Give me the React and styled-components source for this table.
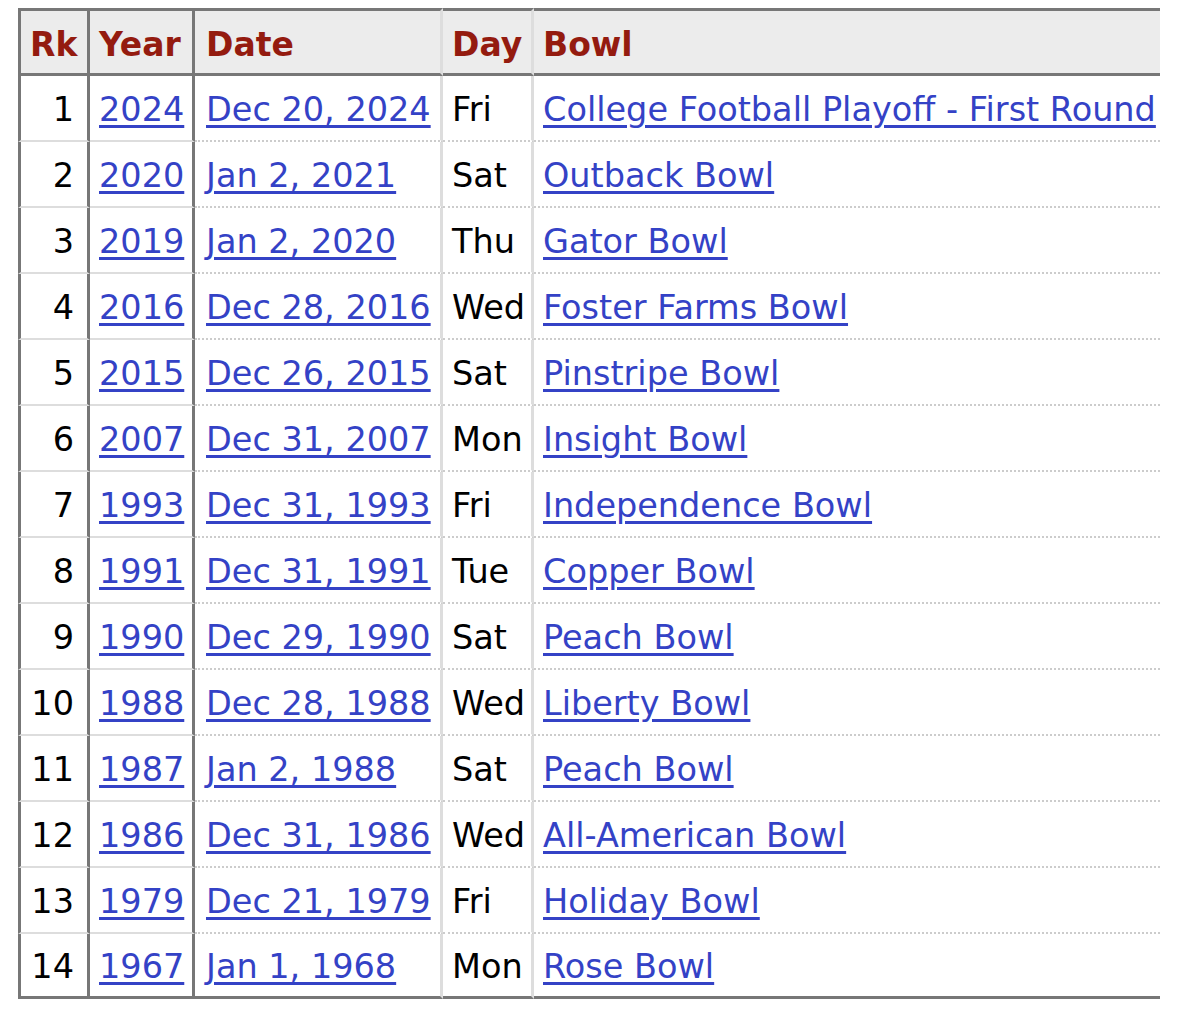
import styled, { createGlobalStyle } from 'styled-components';

const GlobalStyle = createGlobalStyle`
    body {
        margin: 0;
        background: #fff;
        font-family: "DejaVu Sans", Verdana, sans-serif;
    }
`

const bowls = [
    [1, 2024, 'Dec 20, 2024', 'Fri', 'College Football Playoff - First Round'],
    [2, 2020, 'Jan 2, 2021', 'Sat', 'Outback Bowl'],
    [3, 2019, 'Jan 2, 2020', 'Thu', 'Gator Bowl'],
    [4, 2016, 'Dec 28, 2016', 'Wed', 'Foster Farms Bowl'],
    [5, 2015, 'Dec 26, 2015', 'Sat', 'Pinstripe Bowl'],
    [6, 2007, 'Dec 31, 2007', 'Mon', 'Insight Bowl'],
    [7, 1993, 'Dec 31, 1993', 'Fri', 'Independence Bowl'],
    [8, 1991, 'Dec 31, 1991', 'Tue', 'Copper Bowl'],
    [9, 1990, 'Dec 29, 1990', 'Sat', 'Peach Bowl'],
    [10, 1988, 'Dec 28, 1988', 'Wed', 'Liberty Bowl'],
    [11, 1987, 'Jan 2, 1988', 'Sat', 'Peach Bowl'],
    [12, 1986, 'Dec 31, 1986', 'Wed', 'All-American Bowl'],
    [13, 1979, 'Dec 21, 1979', 'Fri', 'Holiday Bowl'],
    [14, 1967, 'Jan 1, 1968', 'Mon', 'Rose Bowl'],
];

// column widths incl. borders
const columns = [
    { key: 'rk', label: 'Rk', width: 72 },
    { key: 'year', label: 'Year', width: 105 },
    { key: 'date', label: 'Date', width: 248 },
    { key: 'day', label: 'Day', width: 91 },
    { key: 'bowl', label: 'Bowl', width: 626 },
];

const App = () => {
    return (
        <>
            <GlobalStyle />
            <Page>
                <BowlTable>
                    <thead>
                        <tr>
                            {columns.map(col => (
                                <HeadCell key={col.key} $col={col.key} $width={col.width}>
                                    {col.label}
                                </HeadCell>
                            ))}
                        </tr>
                    </thead>
                    <tbody>
                        {bowls.map(([rk, year, date, day, bowl], i) => {
                            const last = i === bowls.length - 1;
                            return (
                                <tr key={rk}>
                                    <Cell $col='rk' $last={last}>{rk}</Cell>
                                    <Cell $col='year' $last={last}><Link href='#'>{year}</Link></Cell>
                                    <Cell $col='date' $last={last}><Link href='#'>{date}</Link></Cell>
                                    <Cell $col='day' $last={last}>{day}</Cell>
                                    <Cell $col='bowl' $last={last}><Link href='#'>{bowl}</Link></Cell>
                                </tr>
                            );
                        })}
                    </tbody>
                </BowlTable>
            </Page>
        </>
    )
}

export default App;


const Page = styled.main`
    padding: 8px 0 0 18px;
`

const BowlTable = styled.table`
    border-collapse: separate;
    border-spacing: 0;
    table-layout: fixed;
    width: 1142px;
    font: 400 33.5px/1 "DejaVu Sans", Verdana, sans-serif;
    color: #000;
`

const columnBorders = ({ $col }) => {
    switch ($col) {
        case 'rk':
            return 'border-left: 3px solid #777; border-right: 3px solid #777;';
        case 'year':
            return 'border-right: 3px solid #777;';
        case 'date':
        case 'day':
            return 'border-right: 3px solid #ddd;';
        default:
            return '';
    }
}

const leftPad = ({ $col }) => ($col === 'date' ? 11 : 9);

const HeadCell = styled.th`
    box-sizing: border-box;
    width: ${({ $width }) => $width}px;
    height: 68px;
    padding: 5px 0 0 ${leftPad}px;
    background: #ececec;
    border-top: 3px solid #777;
    border-bottom: 3px solid #777;
    ${columnBorders}
    font-weight: 700;
    font-size: 33px;
    color: #941b0f;
    text-align: left;
    vertical-align: middle;
    white-space: nowrap;
`

const Cell = styled.td`
    box-sizing: border-box;
    height: ${({ $last }) => ($last ? 65 : 66)}px;
    padding: ${props => (props.$col === 'rk' ? '4px 13px 0 0' : `4px 0 0 ${leftPad(props)}px`)};
    text-align: ${({ $col }) => ($col === 'rk' ? 'right' : 'left')};
    vertical-align: middle;
    white-space: nowrap;
    ${columnBorders}
    border-bottom: ${({ $col, $last }) =>
        $last ? '3px solid #777'
            : ($col === 'rk' || $col === 'year') ? '2px solid #ddd' : '2px dotted #ccc'};
`

const Link = styled.a`
    color: #3442c6;
    text-decoration: underline;
    text-decoration-thickness: 2.5px;
    text-underline-offset: 4px;
`
